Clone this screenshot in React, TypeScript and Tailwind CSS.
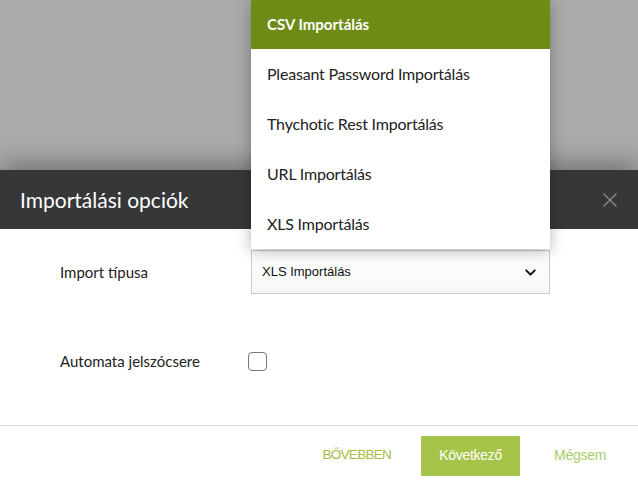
import { ChevronDown } from 'lucide-react';

const options = ['CSV Importálás', 'Pleasant Password Importálás', 'Thychotic Rest Importálás', 'URL Importálás', 'XLS Importálás'];

export default function App() {
    return (
        <div className="relative w-[638px] h-[485px] overflow-hidden bg-[#aaaaaa] flex flex-col font-['Lato',sans-serif]">
            {/* backdrop */}
            <div className="h-[170px] shrink-0" />

            {/* Modal */}
            <div className="flex-1 flex flex-col bg-white shadow-[0_-6px_24px_rgba(0,0,0,0.35)]">
                <div className="h-[59px] bg-[#353739] flex items-center justify-between pl-5 pr-5">
                    <h1 className="text-[21px] text-white">Importálási opciók</h1>
                    <svg width="16" height="16" viewBox="0 0 16 16" className="text-[#8a8b8c]">
                        <path d="M1.5 1.5 L14.5 14.5 M14.5 1.5 L1.5 14.5" stroke="currentColor" strokeWidth="1.4" />
                    </svg>
                </div>

                <div className="h-[197px] pt-[21px] border-b border-[#dddddd]">
                    <div className="flex items-center">
                        <label className="w-[251px] pl-[60px] text-[15px] text-[#222]">Import típusa</label>
                        <div className="w-[299px] h-[44px] border border-[#cccccc] bg-gradient-to-b from-white to-[#f7f7f7] flex items-center justify-between pl-[10px] pr-[10px]">
                            <span className="font-['Liberation_Sans',sans-serif] text-[13px] text-[#111]">XLS Importálás</span>
                            <ChevronDown size={17} strokeWidth={2.8} className="text-[#111]" />
                        </div>
                    </div>
                    <div className="flex items-center mt-[56px]">
                        <label className="w-[248px] pl-[60px] text-[15px] text-[#222]">Automata jelszócsere</label>
                        <div className="w-[19px] h-[19px] rounded-[4px] border-[1.5px] border-[#777]" />
                    </div>
                </div>

                <div className="flex-1 flex items-center justify-end pr-8 font-['Liberation_Sans',sans-serif] text-[14px] tracking-[-0.3px]">
                    <button className="text-[#a2be42] uppercase text-[13.5px] tracking-[-0.7px]">Bővebben</button>
                    <button className="ml-[30px] w-[99px] h-[40px] bg-[#a6c34a] text-white">Következő</button>
                    <button className="ml-[34px] text-[#a9cc6a]">Mégsem</button>
                </div>
            </div>

            {/* Open dropdown menu */}
            <ul className="absolute left-[251px] top-0 w-[299px] bg-white shadow-[0_2px_14px_rgba(0,0,0,0.3)]">
                {options.map((opt, i) => (
                    <li
                        key={opt}
                        className={
                            i === 0
                                ? 'h-[49px] flex items-center pl-4 text-[15px] font-bold text-white bg-[#6e8b15]'
                                : 'h-[50px] flex items-center pl-4 text-[16px] tracking-[-0.2px] text-[#222]'
                        }
                    >
                        {opt}
                    </li>
                ))}
            </ul>
        </div>
    );
}
